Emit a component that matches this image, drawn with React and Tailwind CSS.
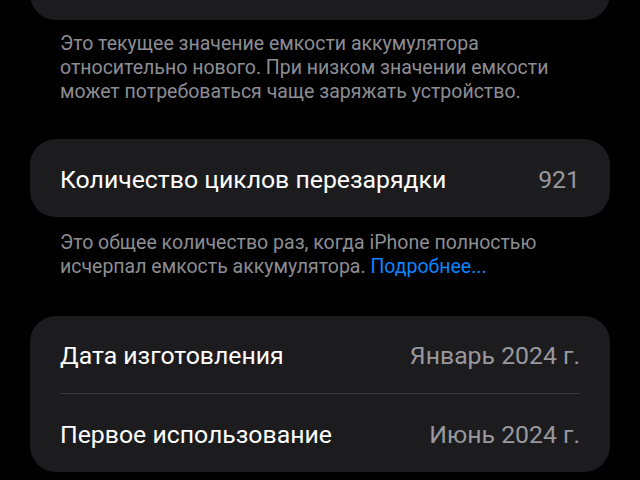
import React from 'react';

// one row inside a grouped card
function Row({ label, value, last }) {
    return (
        <div className="flex h-[78px] items-center">
            <div className={"flex h-full flex-1 items-center justify-between pt-[3px] " + (last ? "" : "border-b border-[#38383a]")}>
                <span className="text-white">{label}</span>
                {value && <span className="text-[#98989e]">{value}</span>}
            </div>
        </div>
    );
}

function App() {
    return (
        <div className="h-[480px] w-[640px] overflow-hidden bg-black font-['Roboto','Liberation_Sans',sans-serif]">
            <div className="mx-[30px]">
                <div className="-mt-[60px] h-[80px] rounded-[26px] bg-[#1c1c1e]"></div>

                <p className="mt-[12px] px-[30px] text-[19.5px] leading-[24px] text-[#8d8d93]">
                    Это текущее значение емкости аккумулятора относительно нового. При низком значении емкости может потребоваться чаще заряжать устройство.
                </p>

                <div className="mt-[35px] rounded-[26px] bg-[#1c1c1e] px-[30px] text-[24.8px]">
                    <Row label="Количество циклов перезарядки" value="921" last />
                </div>

                <p className="mt-[14px] px-[30px] text-[19.5px] leading-[24px] text-[#8d8d93]">
                    Это общее количество раз, когда iPhone полностью исчерпал емкость аккумулятора. <span className="text-[#0a84ff]">Подробнее...</span>
                </p>

                <div className="mt-[37px] rounded-[26px] bg-[#1c1c1e] px-[30px] text-[24.8px]">
                    <Row label="Дата изготовления" value="Январь 2024 г." />
                    <Row label="Первое использование" value="Июнь 2024 г." last />
                </div>
            </div>
        </div>
    );
}

export default App;
